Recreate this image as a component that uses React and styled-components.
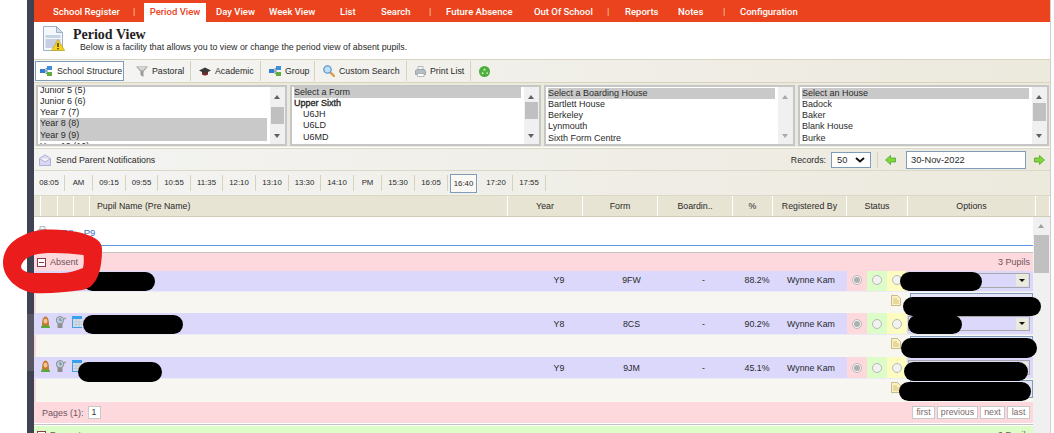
import React from "react";
import styled, { createGlobalStyle } from "styled-components";

const GlobalStyle = createGlobalStyle`
  html, body {
    margin: 0;
    padding: 0;
    background: #fff;
    overflow: hidden;
  }
  * {
    box-sizing: border-box;
  }
`;

const ROW_COLUMNS = "489px 72px 73px 71px 36px 72px 20px 20px 20px 1fr";
const HEAD_COLUMNS = "7px 17px 16px 16px 418px 75px 75px 75px 40px 74px 61px 128px 1fr";

const navItems = [
  { label: "School Register", w: 80 },
  { sep: true, w: 11 },
  { label: "Period View", w: 62, active: true },
  { label: "Day View", w: 53 },
  { label: "Week View", w: 71 },
  { label: "List", w: 41 },
  { label: "Search", w: 48 },
  { sep: true, w: 17 },
  { label: "Future Absence", w: 88 },
  { label: "Out Of School", w: 73 },
  { sep: true, w: 18 },
  { label: "Reports", w: 53 },
  { label: "Notes", w: 45 },
  { sep: true, w: 17 },
  { label: "Configuration", w: 80 },
];

const periods = [
  ["08:05", 31], ["AM", 28], ["09:15", 33], ["09:55", 32], ["10:55", 33], ["11:35", 32],
  ["12:10", 33], ["13:10", 33], ["13:30", 32], ["14:10", 33], ["PM", 28], ["15:30", 33],
  ["16:05", 33], ["16:40", 27, true], ["17:20", 33], ["17:55", 33],
];

const pupils = [
  { year: "Y9", form: "9FW", pct: "88.2%", rowH: 21, noteH: 21, nudge: true },
  { year: "Y8", form: "8CS", pct: "90.2%", rowH: 22, noteH: 22 },
  { year: "Y9", form: "9JM", pct: "45.1%", rowH: 22, noteH: 23 },
];

const redactions = [
  { x: 83, y: 272, w: 72, h: 19 },
  { x: 900, y: 272, w: 82, h: 19 },
  { x: 903, y: 297, w: 138, h: 19 },
  { x: 83, y: 315, w: 100, h: 19 },
  { x: 908, y: 315, w: 54, h: 19 },
  { x: 901, y: 338, w: 136, h: 20 },
  { x: 78, y: 362, w: 84, h: 20 },
  { x: 904, y: 362, w: 124, h: 19 },
  { x: 899, y: 382, w: 132, h: 19 },
];

const NetworkIcon = () => (
  <svg width="12" height="10" viewBox="0 0 12 10">
    <path d="M4 5h4M6 2.5v5M6 2.5h2M6 7.5h2" stroke="#7a8aa0" strokeWidth="1" fill="none" />
    <rect x="0" y="3" width="5" height="4" fill="#2f7fd0" />
    <rect x="7" y="0" width="5" height="4" fill="#3f8fdc" />
    <rect x="7" y="6" width="5" height="4" fill="#5fae3c" />
  </svg>
);

const FunnelIcon = () => (
  <svg width="12" height="11" viewBox="0 0 12 11">
    <path d="M0 0.5h12L7.5 5.5V11L4.5 9V5.5z" fill="#9a9a9a" />
    <path d="M1.5 1h9L7 4.5H5z" fill="#d6d6d6" />
  </svg>
);

const CapIcon = () => (
  <svg width="12" height="9" viewBox="0 0 12 9">
    <path d="M3 4v3.5c1.5 1.2 4.5 1.2 6 0V4z" fill="#7a2a22" />
    <path d="M0 3.5L6 0.5l6 3-6 3z" fill="#3a3a3a" />
  </svg>
);

const SearchIcon = () => (
  <svg width="12" height="12" viewBox="0 0 12 12">
    <path d="M7 7l4 4" stroke="#d99a4a" strokeWidth="2.4" strokeLinecap="round" />
    <circle cx="4.5" cy="4.5" r="3.7" fill="#bfe0f7" stroke="#5c9ccc" strokeWidth="1.3" />
  </svg>
);

const PrinterIcon = () => (
  <svg width="11" height="11" viewBox="0 0 11 11">
    <path d="M3 0.5h5v4H3z" fill="#f4f4f4" stroke="#a0a0a0" strokeWidth="0.7" />
    <path d="M0.5 4.5l2-1h7l1 2v3h-10z" fill="#b4bcc4" stroke="#8a929a" strokeWidth="0.7" />
    <path d="M2.5 7.5h6.5V10.5H2.5z" fill="#fff" stroke="#a0a0a0" strokeWidth="0.7" />
  </svg>
);

const RefreshIcon = () => (
  <svg width="11" height="11" viewBox="0 0 11 11">
    <circle cx="5.5" cy="5.5" r="5.5" fill="#4cae3c" />
    <path d="M5.5 2L7 4.4H4zM2.4 8L3.6 5.6 5 8zM8.6 8L7.2 8 8 5.6 9 7z" fill="#c9ecb8" />
  </svg>
);

const EnvelopeIcon = () => (
  <svg width="12" height="12" viewBox="0 0 12 12">
    <path d="M0.5 4.5L6 0.8l5.5 3.7v7h-11z" fill="#d8d8f4" stroke="#9a9ac4" strokeWidth="0.7" />
    <path d="M0.5 4.5L6 8l5.5-3.5" fill="#f4f4fc" stroke="#9a9ac4" strokeWidth="0.7" />
  </svg>
);

const PageWarningIcon = () => (
  <svg width="22" height="25" viewBox="0 0 22 25">
    <path d="M0.5 0.5h13l6 6V24.5H0.5z" fill="#f4f7fb" stroke="#9fb0c8" />
    <path d="M13.5 0.5v6h6z" fill="#cfdcec" stroke="#9fb0c8" />
    <rect x="2.5" y="9" width="15" height="3" fill="#c6d4e6" />
    <rect x="2.5" y="13" width="15" height="9" fill="#c8cfe4" />
    <path d="M15 13.5L21.7 24.5H8.5z" fill="#f6d21e" stroke="#b89a10" strokeWidth="0.6" />
    <path d="M15 17v4M15 22v1.2" stroke="#222" strokeWidth="1.3" />
  </svg>
);

const PersonIcon = () => (
  <svg width="9" height="12" viewBox="0 0 9 12">
    <path d="M0 12c0-2 1-3 2-3h5c1 0 2 1 2 3z" fill="#58a83c" />
    <path d="M1 9.5C1 4 2 0.5 4.5 0.5S8 4 8 9.5z" fill="#c47a2c" />
    <ellipse cx="4.5" cy="5" rx="2" ry="2.6" fill="#f2c49a" />
  </svg>
);

const ClockIcon = () => (
  <svg width="10" height="12" viewBox="0 0 10 12">
    <rect x="1.5" y="7" width="5" height="5" fill="#8f8f8f" />
    <circle cx="4" cy="4.2" r="3.7" fill="#b9cbd8" stroke="#8f8f8f" />
    <path d="M4 2.3v2h1.6" stroke="#3a6a9a" strokeWidth="0.8" fill="none" />
    <circle cx="9" cy="2.5" r="1" fill="#9a9a9a" />
  </svg>
);

const CalendarIcon = () => (
  <svg width="10" height="12" viewBox="0 0 10 12">
    <rect x="0" y="0" width="10" height="12" fill="#3aa0ee" />
    <rect x="1" y="3" width="9" height="8" fill="#d8dce4" />
    <path d="M1 6h9M1 8.5h9M4 3v8M7 3v8" stroke="#bcc4d2" strokeWidth="0.7" />
  </svg>
);

const NoteIcon = () => (
  <svg width="10" height="11" viewBox="0 0 10 11">
    <path d="M0.5 0.5h6l3 3v7h-9z" fill="#fbf2c4" stroke="#b0a070" strokeWidth="0.7" />
    <path d="M2 4h4M2 6h6M2 8h6" stroke="#c8a850" strokeWidth="0.7" />
  </svg>
);

const GreenArrow = ({ left }) => (
  <svg width="11" height="10" viewBox="0 0 11 10">
    <path
      d={left ? "M0.5 5L5.5 0.5V3h5v4h-5v2.5z" : "M10.5 5L5.5 0.5V3h-5v4h5v2.5z"}
      fill="#7fd83c"
      stroke="#4c9c24"
      strokeWidth="0.7"
    />
  </svg>
);

const RedScribble = () => (
  <svg width="104" height="70" viewBox="0 0 104 70">
    <path
      fillRule="evenodd"
      fill="#ea1c1c"
      d="M3 37C3 25 10 16 20 11C30 5 42 3 52 3.5C68 4 86 6 96 13C101 16 102 20 102 24C102 36 100 46 97 52C93 60 88 63 82 64C66 66 48 68 34 67C18 65 3 52 3 37Z
         M21 41C22 35 27 31 34 29C44 26 66 27 83.5 29C84 33 84 38 83 42C76 45 68 47 61 47L34 47C28 47 22 45 21 41Z"
    />
  </svg>
);

const Page = styled.div`
  position: relative;
  display: flex;
  width: 1054px;
  height: 433px;
  overflow: hidden;
  background: #fff;
  font-family: "Liberation Sans", Arial, sans-serif;
  font-size: 8.8px;
  color: #2a2a2a;
`;

const Gutter = styled.div`
  width: 27px;
  flex: none;
`;

const Strip = styled.div`
  width: 7px;
  flex: none;
  padding-top: 314px;
  background: #3f4250;
`;

const StripHandle = styled.div`
  height: 57px;
  background: #565662;
`;

const Main = styled.div`
  width: 1017px;
  flex: none;
  display: flex;
  flex-direction: column;
  border-right: 1px solid #cfcfcf;
`;

const Nav = styled.nav`
  display: flex;
  height: 22px;
  flex: none;
  align-items: flex-end;
  padding-left: 19px;
  background: #ea431d;
  font-family: Roboto, "Liberation Sans", sans-serif;
  font-size: 9.5px;
  font-weight: 500;
  color: #fff;
`;

const NavLink = styled.span`
  width: ${(p) => p.$w}px;
  flex: none;
  height: 19px;
  line-height: 18px;
  white-space: nowrap;
`;

const NavTab = styled(NavLink)`
  margin-right: 10px;
  background: #fff;
  color: #ea431d;
  text-align: center;
`;

const NavSep = styled(NavLink)`
  color: #f5cf9a;
`;

const TitleBar = styled.header`
  display: flex;
  height: 37px;
  flex: none;
  padding: 4px 0 0 9px;
  gap: 8px;
  background: #fff;
`;

const TitleText = styled.div`
  display: flex;
  flex-direction: column;
  padding-top: 1px;
`;

const Title = styled.h1`
  margin: 0;
  font-family: "Liberation Serif", serif;
  font-size: 14px;
  line-height: 15px;
  font-weight: 700;
  color: #222;
`;

const Subtitle = styled.p`
  margin: 0 0 0 7px;
  font-size: 8.8px;
  line-height: 11px;
`;

const Toolbar = styled.div`
  display: flex;
  align-items: center;
  height: 24px;
  flex: none;
  padding-left: 1px;
  border-top: 1px solid #d8d4c0;
  border-bottom: 1px solid #d8d4c0;
  background: linear-gradient(90deg, #f5f5f4, #ece9dd);
`;

const ToolButton = styled.div`
  display: flex;
  align-items: center;
  gap: ${(p) => p.$gap || 4}px;
  width: ${(p) => p.$w}px;
  height: 20px;
  flex: none;
  padding-left: ${(p) => p.$pad || 0}px;
  border-right: ${(p) => (p.$last ? "none" : "1px solid #d6d2be")};
  white-space: nowrap;
`;

const ToolActive = styled(ToolButton)`
  margin-right: 4px;
  border: 1px solid #7f9db9;
  background: #fff;
`;

const ListRow = styled.div`
  display: grid;
  grid-template-columns: repeat(4, 1fr);
  gap: 3px;
  height: 64px;
  flex: none;
  padding: 2px 1px 1px 2px;
  background: #ece9dd;
`;

const ListBox = styled.div`
  display: flex;
  height: 61px;
  overflow: hidden;
  border: 2px solid #c6c6c6;
  background: #fff;
`;

const ListBody = styled.div`
  flex: 1;
  min-width: 0;
  margin-top: ${(p) => p.$top}px;
  padding: 0 3px 0 2px;
  overflow: hidden;
  font-size: 9px;
  line-height: 11.15px;
`;

const ListItem = styled.div`
  padding-left: ${(p) => (p.$indent ? 9 : 0)}px;
  background: ${(p) => (p.$selected ? "#c9c9c9" : "transparent")};
  -webkit-text-stroke: ${(p) => (p.$group ? "0.35px #2a2a2a" : "0")};
  white-space: nowrap;
`;

const ScrollTrack = styled.div`
  position: relative;
  flex: none;
  width: ${(p) => p.$w || 15}px;
  background: #f0f0f0;
`;

const ScrollThumb = styled.div`
  position: absolute;
  left: 1px;
  right: 1px;
  top: ${(p) => p.$top}px;
  height: ${(p) => p.$h}px;
  background: #c0c0c0;
`;

const ArrowUp = styled.div`
  position: absolute;
  left: 50%;
  top: ${(p) => p.$top}px;
  margin-left: -3.5px;
  border-left: 3.5px solid transparent;
  border-right: 3.5px solid transparent;
  border-bottom: 4px solid ${(p) => p.$color || "#606060"};
`;

const ArrowDown = styled.div`
  position: absolute;
  left: 50%;
  top: ${(p) => p.$top}px;
  margin-left: -3.5px;
  border-left: 3.5px solid transparent;
  border-right: 3.5px solid transparent;
  border-top: 4px solid ${(p) => p.$color || "#606060"};
`;

const ActionBar = styled.div`
  display: flex;
  align-items: center;
  height: 23px;
  flex: none;
  margin-top: 1px;
  padding: 0 5px 0 5px;
  border-top: 1px solid #dcd8c8;
  border-bottom: 1px solid #dcd8c8;
  background: linear-gradient(90deg, #f4f4f3, #ece9dd);
`;

const Notify = styled.div`
  display: flex;
  align-items: center;
  gap: 5px;
  flex: 1;
`;

const RecordsLabel = styled.span`
  margin-right: 5px;
`;

const RecordsSelect = styled.div`
  display: flex;
  align-items: center;
  justify-content: space-between;
  width: 40px;
  height: 16px;
  padding: 0 5px;
  border: 1px solid #7f9db9;
  background: #fff;
  font-size: 9.3px;
`;

const BarDivider = styled.span`
  width: 1px;
  height: 16px;
  margin: 0 7px 0 6px;
  background: #d6d2be;
`;

const DateInput = styled.div`
  width: 120px;
  height: 18px;
  margin: 0 8px 0 10px;
  padding-left: 4px;
  border: 1px solid #7f9db9;
  background: #fff;
  font-size: 9.3px;
  line-height: 16px;
`;

const Timeline = styled.div`
  display: flex;
  align-items: center;
  height: 25px;
  flex: none;
  border-bottom: 1px solid #dcd8c8;
  background: linear-gradient(90deg, #f4f4f3, #ece9dd);
`;

const Period = styled.div`
  width: ${(p) => p.$w}px;
  flex: none;
  height: ${(p) => (p.$active ? 19 : 16)}px;
  line-height: ${(p) => (p.$active ? 17 : 16)}px;
  text-align: center;
  font-size: 7.8px;
  border-right: 1px solid #d6d2be;
  ${(p) => p.$active && "border: 1px solid #7f9db9; background: #faf9f5; margin: 0 3px 0 2px;"}
`;

const HeadRow = styled.div`
  display: grid;
  grid-template-columns: ${HEAD_COLUMNS};
  height: 21px;
  flex: none;
  border-bottom: 1px solid #cfcbb6;
  background: #e8e4d4;
`;

const HeadCell = styled.div`
  padding-left: ${(p) => (p.$left ? 7 : 0)}px;
  border-right: 1px solid #fff;
  line-height: 20px;
  text-align: ${(p) => (p.$left ? "left" : "center")};
  white-space: nowrap;
`;

const TableArea = styled.div`
  display: flex;
  flex: 1;
  min-height: 0;
`;

const Rows = styled.div`
  flex: 1;
  min-width: 0;
`;

const PeriodLinks = styled.div`
  display: flex;
  align-items: flex-start;
  height: 29px;
  padding: 10px 0 0 3px;
  border-bottom: 1px solid #5f9ae0;
  color: #3a6fc4;
  font-size: 9.5px;
`;

const PeriodLink = styled.span`
  margin-left: ${(p) => p.$gap}px;
`;

const PeriodIcon = styled.span`
  margin-top: -1px;
  line-height: 0;
`;

const SectionGap = styled.div`
  height: 7px;
  border-bottom: 1px solid #c4c4c4;
`;

const SectionHead = styled.div`
  display: flex;
  align-items: center;
  justify-content: space-between;
  height: ${(p) => p.$h}px;
  padding: 0 3px 0 3px;
  background: ${(p) => p.$bg};
  color: #6e5560;
  font-size: 9px;
`;

const SectionTitle = styled.div`
  display: flex;
  align-items: center;
  gap: 4px;
`;

const Collapse = styled.span`
  width: 9px;
  height: 9px;
  border: 1px solid #8a3a4a;
  background: #fff;
  position: relative;
  &::after {
    content: "";
    position: absolute;
    left: 1px;
    right: 1px;
    top: 3px;
    height: 1px;
    background: #8a3a4a;
  }
`;

const PupilRow = styled.div`
  display: grid;
  grid-template-columns: ${ROW_COLUMNS};
  height: ${(p) => p.$h}px;
  border-bottom: 1px solid #eceaf4;
  background: #dcd8fc;
  align-items: stretch;
  ${(p) => p.$nudge && "& > div { padding-bottom: 2px; }"}
`;

const Cell = styled.div`
  display: flex;
  align-items: center;
  justify-content: center;
`;

const IconCell = styled.div`
  display: flex;
  align-items: flex-start;
  gap: 6px;
  padding: 3px 0 0 7px;
`;

const StatusCell = styled(Cell)`
  background: ${(p) => p.$bg};
`;

const Radio = styled.span`
  display: flex;
  align-items: center;
  justify-content: center;
  width: 10px;
  height: 10px;
  border: 1px solid #b8b8b8;
  border-radius: 50%;
  background: #f2f2f0;
  &::after {
    content: "";
    width: 6px;
    height: 6px;
    border-radius: 50%;
    background: ${(p) => (p.$on ? "#b0b0b0" : "transparent")};
  }
`;

const OptionCell = styled(Cell)`
  padding: 0 3px 0 1px;
`;

const OptionSelect = styled.div`
  display: flex;
  justify-content: flex-end;
  align-items: center;
  width: 100%;
  height: 15px;
  padding-right: 1px;
  border: 1px solid #a8a8a8;
  background: #dcd8fc;
`;

const OptionArrow = styled.span`
  display: flex;
  align-items: center;
  justify-content: center;
  width: 12px;
  height: 12px;
  background: #ece9dd;
  &::after {
    content: "";
    border-left: 3px solid transparent;
    border-right: 3px solid transparent;
    border-top: 3px solid #111;
  }
`;

const NoteRow = styled.div`
  display: flex;
  justify-content: flex-end;
  align-items: flex-start;
  gap: 9px;
  height: ${(p) => p.$h}px;
  border-left: 2px solid #f7d8dc;
  background: #f7f6f1;
`;

const NoteIconWrap = styled.span`
  margin-top: 3px;
`;

const NoteBox = styled.div`
  width: 123px;
  height: 18px;
  margin-top: 1px;
  border: 1px solid #7f9db9;
  background: #e6e4f8;
`;

const Pager = styled.div`
  display: flex;
  align-items: center;
  justify-content: space-between;
  height: 21px;
  padding: 0 3px 0 8px;
  background: #fdd8dc;
  color: #6e5560;
  font-size: 9px;
`;

const PagerGroup = styled.div`
  display: flex;
  align-items: center;
  gap: 2px;
`;

const PageButton = styled.span`
  width: ${(p) => p.$w}px;
  height: 13px;
  line-height: 11px;
  text-align: center;
  border: 1px solid #c8c8c8;
  background: #fff;
  color: ${(p) => (p.$current ? "#333" : "#7a6a6a")};
  font-size: 8.8px;
`;

const PagerLabel = styled.span`
  margin-right: 2px;
`;

const SectionDivider = styled.div`
  height: 2px;
  margin-top: 1px;
  border-top: 1px solid #c4c4c4;
`;

const TableScroll = styled(ScrollTrack)`
  width: 17px;
  align-self: stretch;
  background: #f0f0f0;
`;

const Redaction = styled.div`
  position: absolute;
  border-radius: 10px;
  background: #000;
`;

const Scribble = styled.div`
  position: absolute;
  left: 0;
  top: 226px;
  line-height: 0;
`;

const ChevronDown = () => (
  <svg width="10" height="6" viewBox="0 0 10 6">
    <path d="M1 1l4 3.5L9 1" fill="none" stroke="#111" strokeWidth="2" />
  </svg>
);

const SelectList = ({ top, items, thumb, disabled }) => (
  <ListBox>
    <ListBody $top={top}>
      {items.map((item) => (
        <ListItem
          key={item.label}
          $selected={item.selected}
          $indent={item.indent}
          $group={item.group}
        >
          {item.label}
        </ListItem>
      ))}
    </ListBody>
    <ScrollTrack>
      <ArrowUp $top={8} $color={disabled ? "#a8a8a8" : undefined} />
      {thumb && <ScrollThumb $top={thumb.top} $h={thumb.h} />}
      <ArrowDown $top={47} $color={disabled ? "#a8a8a8" : undefined} />
    </ScrollTrack>
  </ListBox>
);

const App = () => {
  return (
    <>
      <GlobalStyle />
      <Page>
        <Gutter />
        <Strip>
          <StripHandle />
        </Strip>
        <Main>
          <Nav>
            {navItems.map((item, index) => {
              if (item.sep) {
                return (
                  <NavSep key={index} $w={item.w}>
                    |
                  </NavSep>
                );
              }
              if (item.active) {
                return (
                  <NavTab key={index} $w={item.w}>
                    {item.label}
                  </NavTab>
                );
              }
              return (
                <NavLink key={index} $w={item.w}>
                  {item.label}
                </NavLink>
              );
            })}
          </Nav>

          <TitleBar>
            <PageWarningIcon />
            <TitleText>
              <Title>Period View</Title>
              <Subtitle>
                Below is a facility that allows you to view or change the period view of absent pupils.
              </Subtitle>
            </TitleText>
          </TitleBar>

          <Toolbar>
            <ToolActive $w={89} $pad={4} $gap={5}>
              <NetworkIcon />
              School Structure
            </ToolActive>
            <ToolButton $w={63} $pad={8}>
              <FunnelIcon />
              Pastoral
            </ToolButton>
            <ToolButton $w={70} $pad={8}>
              <CapIcon />
              Academic
            </ToolButton>
            <ToolButton $w={54} $pad={8}>
              <NetworkIcon />
              Group
            </ToolButton>
            <ToolButton $w={92} $pad={8}>
              <SearchIcon />
              Custom Search
            </ToolButton>
            <ToolButton $w={64} $pad={8}>
              <PrinterIcon />
              Print List
            </ToolButton>
            <ToolButton $w={30} $pad={8} $last>
              <RefreshIcon />
            </ToolButton>
          </Toolbar>

          <ListRow>
            <SelectList
              top={-2}
              thumb={{ top: 20, h: 17 }}
              items={[
                { label: "Junior 5 (5)" },
                { label: "Junior 6 (6)" },
                { label: "Year 7 (7)" },
                { label: "Year 8 (8)", selected: true },
                { label: "Year 9 (9)", selected: true },
                { label: "Year 10 (10)" },
              ]}
            />
            <SelectList
              top={0}
              thumb={{ top: 15, h: 17 }}
              items={[
                { label: "Select a Form", selected: true },
                { label: "Upper Sixth", group: true },
                { label: "U6JH", indent: true },
                { label: "U6LD", indent: true },
                { label: "U6MD", indent: true },
                { label: "U6MJ", indent: true },
              ]}
            />
            <SelectList
              top={1}
              disabled
              items={[
                { label: "Select a Boarding House", selected: true },
                { label: "Bartlett House" },
                { label: "Berkeley" },
                { label: "Lynmouth" },
                { label: "Sixth Form Centre" },
              ]}
            />
            <SelectList
              top={1}
              thumb={{ top: 16, h: 18 }}
              items={[
                { label: "Select an House", selected: true },
                { label: "Badock" },
                { label: "Baker" },
                { label: "Blank House" },
                { label: "Burke" },
                { label: "Hardy" },
              ]}
            />
          </ListRow>

          <ActionBar>
            <Notify>
              <EnvelopeIcon />
              Send Parent Notifications
            </Notify>
            <RecordsLabel>Records:</RecordsLabel>
            <RecordsSelect>
              50
              <ChevronDown />
            </RecordsSelect>
            <BarDivider />
            <GreenArrow left />
            <DateInput>30-Nov-2022</DateInput>
            <GreenArrow />
          </ActionBar>

          <Timeline>
            {periods.map(([label, width, active]) => (
              <Period key={label} $w={width} $active={active}>
                {label}
              </Period>
            ))}
          </Timeline>

          <HeadRow>
            <HeadCell />
            <HeadCell />
            <HeadCell />
            <HeadCell />
            <HeadCell $left>Pupil Name (Pre Name)</HeadCell>
            <HeadCell>Year</HeadCell>
            <HeadCell>Form</HeadCell>
            <HeadCell>Boardin..</HeadCell>
            <HeadCell>%</HeadCell>
            <HeadCell>Registered By</HeadCell>
            <HeadCell>Status</HeadCell>
            <HeadCell>Options</HeadCell>
            <HeadCell />
          </HeadRow>

          <TableArea>
            <Rows>
              <PeriodLinks>
                <PeriodIcon>
                  <PrinterIcon />
                </PeriodIcon>
                <PeriodLink $gap={14}>P8</PeriodLink>
                <PeriodLink $gap={10}>P9</PeriodLink>
              </PeriodLinks>
              <SectionGap />
              <SectionHead $h={18} $bg="#fdd8dc">
                <SectionTitle>
                  <Collapse />
                  Absent
                </SectionTitle>
                3 Pupils
              </SectionHead>
              {pupils.map((pupil) => (
                <React.Fragment key={pupil.form}>
                  <PupilRow $h={pupil.rowH} $nudge={pupil.nudge}>
                    <IconCell>
                      <PersonIcon />
                      <ClockIcon />
                      <CalendarIcon />
                    </IconCell>
                    <Cell>{pupil.year}</Cell>
                    <Cell>{pupil.form}</Cell>
                    <Cell>-</Cell>
                    <Cell>{pupil.pct}</Cell>
                    <Cell>Wynne Kam</Cell>
                    <StatusCell $bg="#fdd8dc">
                      <Radio $on />
                    </StatusCell>
                    <StatusCell $bg="#dcfcc8">
                      <Radio />
                    </StatusCell>
                    <StatusCell $bg="#fcfcc0">
                      <Radio />
                    </StatusCell>
                    <OptionCell>
                      <OptionSelect>
                        <OptionArrow />
                      </OptionSelect>
                    </OptionCell>
                  </PupilRow>
                  <NoteRow $h={pupil.noteH}>
                    <NoteIconWrap>
                      <NoteIcon />
                    </NoteIconWrap>
                    <NoteBox />
                  </NoteRow>
                </React.Fragment>
              ))}
              <Pager>
                <PagerGroup>
                  <PagerLabel>Pages (1):</PagerLabel>
                  <PageButton $current $w={13}>
                    1
                  </PageButton>
                </PagerGroup>
                <PagerGroup>
                  <PageButton $w={23}>first</PageButton>
                  <PageButton $w={41}>previous</PageButton>
                  <PageButton $w={25}>next</PageButton>
                  <PageButton $w={23}>last</PageButton>
                </PagerGroup>
              </Pager>
              <SectionDivider />
              <SectionHead $h={18} $bg="#dcfcc8">
                <SectionTitle>
                  <Collapse />
                  Present
                </SectionTitle>
                0 Pupils
              </SectionHead>
            </Rows>
            <TableScroll>
              <ArrowUp $top={7} $color="#a0a0a0" />
              <ScrollThumb $top={18} $h={38} />
            </TableScroll>
          </TableArea>
        </Main>

        {redactions.map((r) => (
          <Redaction
            key={`${r.x}-${r.y}`}
            style={{ left: r.x, top: r.y, width: r.w, height: r.h }}
          />
        ))}
        <Scribble>
          <RedScribble />
        </Scribble>
      </Page>
    </>
  );
};

export default App;
